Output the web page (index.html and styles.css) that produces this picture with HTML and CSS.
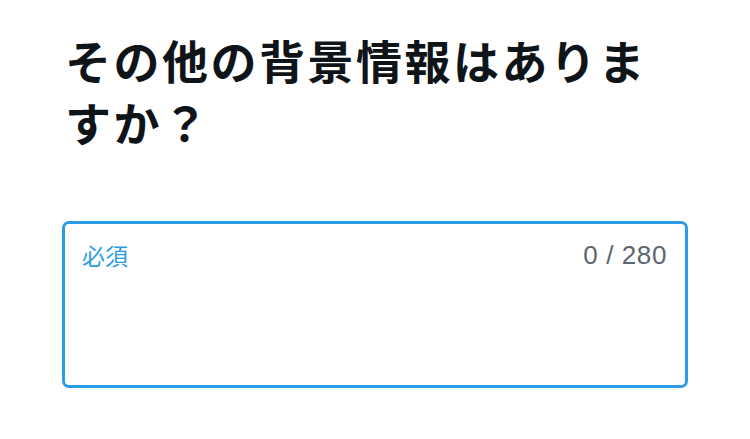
FILE: index.html
```html
<!DOCTYPE html>
<html lang="ja">
<head>
  <meta charset="UTF-8">
  <meta name="viewport" content="width=device-width, initial-scale=1.0">
  <title>背景情報</title>
  <link rel="stylesheet" href="styles.css">
</head>
<body>
  <div class="page">
    <h1 class="question">その他の背景情報はありますか？</h1>
    <label class="field">
      <div class="field-top">
        <span class="field-label">必須</span>
        <span class="counter">0 / 280</span>
      </div>
      <textarea class="field-input"></textarea>
    </label>
  </div>
</body>
</html>
```

FILE: styles.css
```css
* {
  margin: 0;
  padding: 0;
  box-sizing: border-box;
}

body {
  font-family: "Noto Sans CJK JP", "Noto Sans", sans-serif;
  background-color: #fff;
  color: #0f1419;
}

.page {
  padding: 28px 62px 0 62px;
}

.question {
  font-size: 46px;
  font-weight: 700;
  line-height: 62px;
  letter-spacing: 2.5px;
  padding-left: 3px;
}

.field {
  display: flex;
  flex-direction: column;
  margin-top: 69px;
  height: 167px;
  border: 3px solid #2a9de6;
  border-radius: 7px;
  padding: 14px 18px 10px 17px;
}

.field-top {
  display: flex;
  justify-content: space-between;
  align-items: center;
}

.field-label {
  color: #2a9de6;
  font-size: 23px;
}

.counter {
  color: #5b6770;
  font-family: "Liberation Sans", "Noto Sans", sans-serif;
  font-size: 26px;
  letter-spacing: 0.6px;
}

.field-input {
  flex: 1;
  border: none;
  outline: none;
  resize: none;
  font-family: inherit;
  font-size: 20px;
}
```
